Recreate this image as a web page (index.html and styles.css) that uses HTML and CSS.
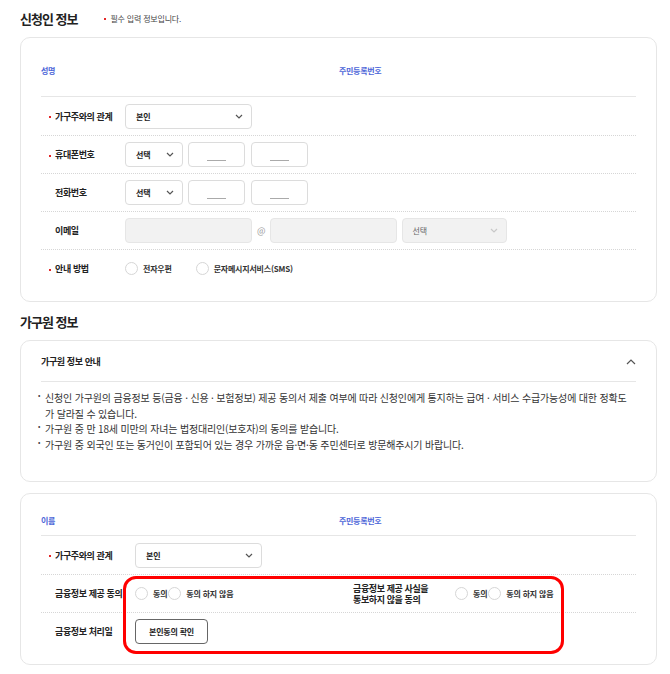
FILE: index.html
```html
<!DOCTYPE html>
<html lang="ko">
<head>
<meta charset="utf-8">
<title>신청인 정보</title>
<link rel="stylesheet" href="styles.css">
</head>
<body>
<main class="page">
  <section class="section">
    <div class="section-head first">
      <h2 class="section-title">신청인 정보</h2>
      <p class="req-note"><span class="req-dot"></span>필수 입력 정보입니다.</p>
    </div>
    <div class="card card-applicant">
      <div class="card-head head-tall">
        <span class="blue-label">성명</span>
        <span class="blue-label">주민등록번호</span>
      </div>
      <div class="form-row">
        <div class="row-label req">가구주와의 관계</div>
        <div class="field">
          <div class="select w127"><span class="sel-text">본인</span><svg class="chev" width="8" height="5" viewBox="0 0 8 5"><path d="M1 1l3 3 3-3" fill="none" stroke="#555" stroke-width="1.2"/></svg></div>
        </div>
      </div>
      <div class="form-row">
        <div class="row-label req">휴대폰번호</div>
        <div class="field">
          <div class="select w58"><span class="sel-text">선택</span><svg class="chev" width="8" height="5" viewBox="0 0 8 5"><path d="M1 1l3 3 3-3" fill="none" stroke="#555" stroke-width="1.2"/></svg></div>
          <div class="input w57"><span class="blank"></span></div>
          <div class="input w57 ml6"><span class="blank"></span></div>
        </div>
      </div>
      <div class="form-row">
        <div class="row-label">전화번호</div>
        <div class="field">
          <div class="select w58"><span class="sel-text">선택</span><svg class="chev" width="8" height="5" viewBox="0 0 8 5"><path d="M1 1l3 3 3-3" fill="none" stroke="#555" stroke-width="1.2"/></svg></div>
          <div class="input w57"><span class="blank"></span></div>
          <div class="input w57 ml6"><span class="blank"></span></div>
        </div>
      </div>
      <div class="form-row">
        <div class="row-label">이메일</div>
        <div class="field">
          <div class="input disabled w127"></div>
          <span class="at">@</span>
          <div class="input disabled w127 ml0"></div>
          <div class="select disabled w105"><span class="sel-text muted">선택</span><svg class="chev" width="8" height="5" viewBox="0 0 8 5"><path d="M1 1l3 3 3-3" fill="none" stroke="#c8c8c8" stroke-width="1.2"/></svg></div>
        </div>
      </div>
      <div class="form-row">
        <div class="row-label req">안내 방법</div>
        <div class="field radios wide">
          <label class="radio-item"><span class="radio"></span><span class="radio-text">전자우편</span></label>
          <label class="radio-item"><span class="radio"></span><span class="radio-text">문자메시지서비스(SMS)</span></label>
        </div>
      </div>
    </div>
  </section>

  <section class="section">
    <div class="section-head">
      <h2 class="section-title">가구원 정보</h2>
    </div>
    <div class="card card-info">
      <div class="info-head">
        <span class="info-title">가구원 정보 안내</span>
        <svg class="chev-up" width="10" height="6" viewBox="0 0 10 6"><path d="M1 5l4-4 4 4" fill="none" stroke="#555" stroke-width="1.2"/></svg>
      </div>
      <ul class="info-list">
        <li>신청인 가구원의 금융정보 등(금융 · 신용 · 보험정보) 제공 동의서 제출 여부에 따라 신청인에게 통지하는 급여 · 서비스 수급가능성에 대한 정확도 가 달라질 수 있습니다.</li>
        <li>가구원 중 만 18세 미만의 자녀는 법정대리인(보호자)의 동의를 받습니다.</li>
        <li>가구원 중 외국인 또는 동거인이 포함되어 있는 경우 가까운 읍·면·동 주민센터로 방문해주시기 바랍니다.</li>
      </ul>
    </div>

    <div class="card card-member">
      <div class="card-head head-short">
        <span class="blue-label">이름</span>
        <span class="blue-label">주민등록번호</span>
      </div>
      <div class="form-row wide-label">
        <div class="row-label req">가구주와의 관계</div>
        <div class="field">
          <div class="select w127"><span class="sel-text">본인</span><svg class="chev" width="8" height="5" viewBox="0 0 8 5"><path d="M1 1l3 3 3-3" fill="none" stroke="#555" stroke-width="1.2"/></svg></div>
        </div>
      </div>
      <div class="form-row wide-label split">
        <div class="half">
          <div class="row-label">금융정보 제공 동의</div>
          <div class="field radios tight">
            <label class="radio-item"><span class="radio"></span><span class="radio-text">동의</span></label>
            <label class="radio-item"><span class="radio"></span><span class="radio-text">동의 하지 않음</span></label>
          </div>
        </div>
        <div class="half">
          <div class="row-label right-label">금융정보 제공 사실을 통보하지 않을 동의</div>
          <div class="field radios tight">
            <label class="radio-item"><span class="radio"></span><span class="radio-text">동의</span></label>
            <label class="radio-item"><span class="radio"></span><span class="radio-text">동의 하지 않음</span></label>
          </div>
        </div>
      </div>
      <div class="form-row wide-label">
        <div class="row-label">금융정보 처리일</div>
        <div class="field">
          <button class="btn-outline" type="button">본인동의 확인</button>
        </div>
      </div>
      <div class="highlight"></div>
    </div>
  </section>
</main>
</body>
</html>
```

FILE: styles.css
```css
* {
  box-sizing: border-box;
  margin: 0;
  padding: 0;
}

body {
  font-family: "Noto Sans CJK KR", "Noto Sans", sans-serif;
  color: #222;
  background: #fff;
}

.page {
  padding-left: 20px;
  width: 670px;
}

.section-head {
  display: flex;
  align-items: center;
  height: 20px;
  margin-top: 10px;
  margin-bottom: 8px;
}

.section-head.first {
  margin-top: 9px;
}

.section-title {
  font-size: 13px;
  font-weight: 700;
  letter-spacing: -1px;
  line-height: 20px;
  color: #222;
}

.req-note {
  display: flex;
  align-items: center;
  margin-left: 27px;
  font-size: 8px;
  letter-spacing: -0.2px;
  color: #444;
  line-height: 12px;
}

.req-dot {
  display: inline-block;
  width: 2px;
  height: 2px;
  background: #e52727;
  margin-right: 4px;
}

.card {
  width: 637px;
  border: 1px solid #e6e6e6;
  border-radius: 10px;
  background: #fff;
}

.card-applicant {
  padding: 0 20px 14px 20px;
}

.card-head {
  display: grid;
  grid-template-columns: 298px 1fr;
  border-bottom: 1px solid #e6e6e6;
  line-height: 14px;
}

.head-tall {
  padding: 26px 0 18px;
}

.head-short {
  padding: 20px 0 7px;
}

.blue-label {
  font-size: 8px;
  font-weight: 700;
  letter-spacing: -0.3px;
  color: #4d66d8;
}

.form-row {
  display: flex;
  align-items: center;
  height: 38px;
  border-top: 1px dotted #d6d6d6;
  --label-w: 84px;
}

.card-head + .form-row {
  border-top: none;
}

.form-row.wide-label {
  --label-w: 94px;
}

.row-label {
  flex: none;
  width: var(--label-w);
  padding-left: 14px;
  font-size: 9px;
  font-weight: 700;
  letter-spacing: -0.4px;
  color: #222;
  line-height: 11px;
}

.row-label.req {
  padding-left: 8px;
}

.row-label.req::before {
  content: "";
  display: inline-block;
  width: 2px;
  height: 2px;
  background: #e52727;
  margin-right: 4px;
  vertical-align: middle;
}

.field {
  display: flex;
  align-items: center;
}

.select,
.input {
  height: 25px;
  border: 1px solid #dcdcdc;
  border-radius: 4px;
  background: #fff;
  display: flex;
  align-items: center;
}

.select {
  justify-content: space-between;
  padding: 0 8px 0 10px;
}

.sel-text {
  font-size: 8px;
  font-weight: 700;
  letter-spacing: -0.2px;
  color: #222;
}

.sel-text.muted {
  font-weight: 400;
  color: #666;
}

.input {
  justify-content: center;
  margin-left: 5px;
}

.input.ml6 {
  margin-left: 6px;
}

.input.ml0 {
  margin-left: 0;
}

.blank {
  display: block;
  width: 19px;
  height: 1px;
  background: #aaa;
  margin-top: 11px;
}

.disabled {
  background: #f2f2f2;
  border-color: #e6e6e6;
}

.select.disabled {
  margin-left: 5px;
}

.input.disabled:first-child {
  margin-left: 0;
}

.w127 { width: 127px; }
.w58 { width: 58px; }
.w57 { width: 57px; }
.w105 { width: 105px; }

.at {
  font-size: 9px;
  color: #999;
  margin: 0 4px 0 5px;
}

.radios.wide {
  gap: 24px;
}

.radios.tight {
  gap: 1px;
}

.radio-item {
  display: flex;
  align-items: center;
  gap: 5px;
}

.radio {
  display: block;
  width: 13px;
  height: 13px;
  border: 1px solid #d6d6d6;
  border-radius: 50%;
  background: #fff;
}

.radio-text {
  font-size: 8px;
  font-weight: 700;
  letter-spacing: -0.2px;
  color: #333;
}

.card-info {
  margin-bottom: 11px;
  padding: 0 20px 29px 20px;
}

.info-head {
  display: flex;
  align-items: center;
  justify-content: space-between;
  padding: 14px 0 12px;
  line-height: 14px;
  border-bottom: 1px solid #e6e6e6;
}

.info-title {
  font-size: 9px;
  font-weight: 700;
  letter-spacing: -0.4px;
}

.info-list {
  list-style: none;
  margin: 8px 0 0 -3px;
}

.info-list li {
  display: flex;
  font-size: 10px;
  line-height: 15.5px;
  letter-spacing: -0.17px;
  color: #333;
  word-break: keep-all;
}

.info-list li::before {
  content: "•";
  flex: none;
  width: 7px;
  font-size: 7px;
  line-height: 11px;
  color: #444;
}

.card-member {
  position: relative;
  padding: 0 20px 14px 20px;
}

.form-row.split {
  display: grid;
  grid-template-columns: 298px 1fr;
}

.half {
  display: flex;
  align-items: center;
}

.right-label {
  width: 116px;
  padding-right: 12px;
  word-break: keep-all;
}

.btn-outline {
  width: 73px;
  height: 25px;
  border: 1px solid #666;
  border-radius: 4px;
  background: #fff;
  font-family: inherit;
  font-size: 8px;
  font-weight: 700;
  letter-spacing: -0.2px;
  color: #222;
}

.highlight {
  position: absolute;
  left: 102px;
  top: 82px;
  width: 441px;
  height: 78px;
  border: 3px solid #f00;
  border-radius: 13px;
  pointer-events: none;
}
```
